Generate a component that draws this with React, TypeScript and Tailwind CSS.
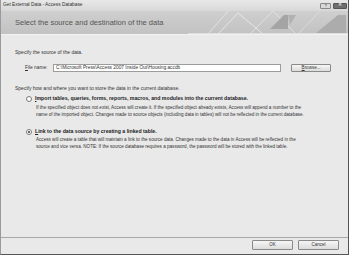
import React from "react";

const font = { fontFamily: '"Liberation Sans", Arial, sans-serif' };

function Radio({ checked }: { checked?: boolean }) {
  return (
    <span className="flex h-[6px] w-[6px] shrink-0 items-center justify-center rounded-full border border-[#7a7a7a] bg-white">
      {checked && <span className="h-[2px] w-[2px] rounded-full bg-[#333]" />}
    </span>
  );
}

function Button({ children }: { children: React.ReactNode }) {
  return (
    <div className="flex h-[10px] w-[41px] items-center justify-center rounded-[1px] border border-[#8a8a8a] bg-gradient-to-b from-[#f6f6f6] to-[#dcdcdc] text-[4.5px] text-[#333]">
      {children}
    </div>
  );
}

function Banner() {
  return (
    <div className="relative flex h-[23px] items-center overflow-hidden bg-gradient-to-b from-[#cfcfcf] to-[#c2c2c2] pl-[14px]">
      <svg className="absolute right-0 top-0" width="160" height="23" viewBox="0 0 160 23">
        <polyline points="20,23 40,0" fill="none" stroke="#e2e2e2" strokeWidth="1" />
        <polyline points="30,23 50,2 75,23" fill="none" stroke="#e6e6e6" strokeWidth="1" />
        <polyline points="62,23 85,0 108,23" fill="none" stroke="#e0e0e0" strokeWidth="1" />
        <polygon points="82,18 96,4 100,4 100,18" fill="#a4a4a4" />
        <polygon points="100,4 108,4 102,14" fill="#b2b2b2" />
        <polyline points="110,23 132,0" fill="none" stroke="#dcdcdc" strokeWidth="1" />
        <polygon points="128,22 158,22 158,4 150,4" fill="#acacac" />
        <rect x="0" y="22" width="160" height="1" fill="#dedede" />
      </svg>
      <span className="relative text-[7.5px] leading-none text-[#555]">
        Select the source and destination of the data
      </span>
    </div>
  );
}

export default function App() {
  return (
    <div className="h-[257px] w-[350px] bg-white" style={font}>
      <div className="flex h-[255px] w-[349px] flex-col border-b border-l border-r border-b-[#555] border-l-[#9a9a9a] border-r-[#555] bg-[#e9e9e9]">
        <div className="flex h-[11px] items-center justify-between bg-gradient-to-b from-[#e8e8e8] to-[#d8d8d8] pl-[2px] pr-[1px]">
          <span className="text-[4.8px] leading-none text-[#333]">Get External Data - Access Database</span>
          <div className="flex items-center gap-[2px]">
            <div className="flex h-[6px] w-[11px] items-center justify-center rounded-[1px] border border-[#888] bg-[#d8d8d8] text-[4px] leading-none text-[#333]">
              ?
            </div>
            <div className="flex h-[6px] w-[14px] items-center justify-center rounded-[1px] border border-[#555] bg-[#6e6e6e] text-[4.5px] leading-none text-white">
              ✕
            </div>
          </div>
        </div>
        <Banner />
        <div className="h-px bg-[#f3f3f3]" />
        <div className="flex flex-1 flex-col pl-[14px] pr-[12px] text-[#333]">
          <p className="mt-[14px] text-[5px] leading-[6px]">Specify the source of the data.</p>
          <div className="mt-[9px] flex h-[8px] items-center">
            <span className="ml-[10px] w-[28px] text-[4.8px] leading-none">
              <span className="underline">F</span>ile name:
            </span>
            <div className="flex h-[8px] w-[228px] items-center border border-[#9c9c9c] bg-white pl-[2px] text-[4.8px] leading-none">
              C:\Microsoft Press\Access 2007 Inside Out\Housing.accdb
            </div>
            <div className="ml-[10px] flex h-[8px] w-[40px] items-center justify-center rounded-[1px] border border-[#8a8a8a] bg-gradient-to-b from-[#f6f6f6] to-[#dcdcdc] text-[4.5px] leading-none">
              <span className="underline">B</span>rowse...
            </div>
          </div>
          <p className="mt-[13px] text-[5px] leading-[6px]">
            Specify how and where you want to store the data in the current database.
          </p>
          <div className="ml-[11px] mt-[4px] flex items-center gap-[3px]">
            <Radio />
            <span className="text-[5.2px] font-bold leading-[7px] text-[#222]">
              <span className="underline">I</span>mport tables, queries, forms, reports, macros, and modules into the current database.
            </span>
          </div>
          <p className="ml-[21px] mt-[2px] text-[4.6px] leading-[7px]">
            If the specified object does not exist, Access will create it. If the specified object already exists, Access will append a number to the
            <br />
            name of the imported object. Changes made to source objects (including data in tables) will not be reflected in the current database.
          </p>
          <div className="ml-[11px] mt-[10px] flex items-center gap-[3px]">
            <Radio checked />
            <span className="text-[5.2px] font-bold leading-[7px] text-[#222]">
              <span className="underline">L</span>ink to the data source by creating a linked table.
            </span>
          </div>
          <p className="ml-[21px] mt-[1px] text-[4.6px] leading-[7px]">
            Access will create a table that will maintain a link to the source data. Changes made to the data in Access will be reflected in the
            <br />
            source and vice versa. NOTE: If the source database requires a password, the password will be stored with the linked table.
          </p>
        </div>
        <div className="flex justify-end gap-[5px] border-t border-[#a8a8a8] pb-[4px] pr-[9px] pt-[2px]">
          <Button>OK</Button>
          <Button>Cancel</Button>
        </div>
      </div>
    </div>
  );
}
